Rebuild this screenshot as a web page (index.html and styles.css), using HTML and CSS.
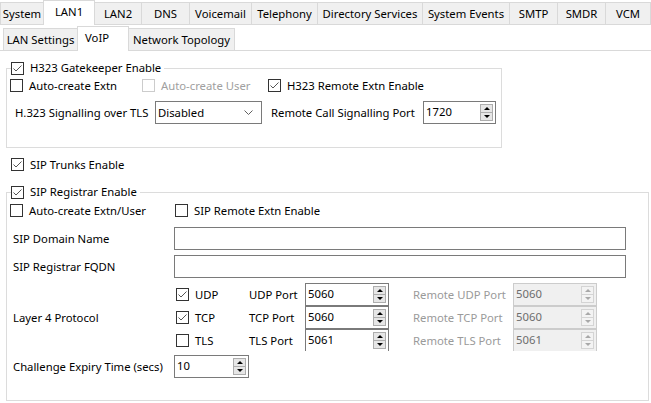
FILE: index.html
```html
<!DOCTYPE html>
<html lang="en">
<head>
    <meta charset="UTF-8">
    <meta name="viewport" content="width=device-width, initial-scale=1.0">
    <title>VoIP Settings</title>
    <link rel="stylesheet" href="styles.css">
</head>
<body>

    <!-- Main tabs -->
    <div class="tabs tabs-main">
        <div class="tab">System</div>
        <div class="tab active">LAN1</div>
        <div class="tab">LAN2</div>
        <div class="tab">DNS</div>
        <div class="tab">Voicemail</div>
        <div class="tab">Telephony</div>
        <div class="tab">Directory Services</div>
        <div class="tab">System Events</div>
        <div class="tab">SMTP</div>
        <div class="tab">SMDR</div>
        <div class="tab">VCM</div>
    </div>

    <!-- Sub tabs -->
    <div class="tabs tabs-sub">
        <div class="tab">LAN Settings</div>
        <div class="tab active">VoIP</div>
        <div class="tab">Network Topology</div>
    </div>

    <div class="page">

        <!-- H323 -->
        <fieldset class="group group-h323">
            <legend>
                <label class="check"><span class="box"><svg viewBox="0 0 11 11"><path d="M1.5 5.5 L4 8 L9.5 2.5"/></svg></span>H323 Gatekeeper Enable</label>
            </legend>
            <div class="row row-checks">
                <label class="check w-extn"><span class="box"></span>Auto-create Extn</label>
                <label class="check w-user disabled"><span class="box"></span>Auto-create User</label>
                <label class="check"><span class="box"><svg viewBox="0 0 11 11"><path d="M1.5 5.5 L4 8 L9.5 2.5"/></svg></span>H323 Remote Extn Enable</label>
            </div>
            <div class="row row-tls">
                <span class="lbl lbl-tls">H.323 Signalling over TLS</span>
                <div class="select">
                    <span>Disabled</span>
                    <svg viewBox="0 0 9 5"><path d="M0.5 0.5 L4.5 4.5 L8.5 0.5"/></svg>
                </div>
                <span class="lbl lbl-port">Remote Call Signalling Port</span>
                <div class="spin spin-call">
                    <span class="val">1720</span>
                    <span class="arrows"><span class="arr up"></span><span class="arr down"></span></span>
                </div>
            </div>
        </fieldset>

        <div class="row row-trunks">
            <label class="check"><span class="box"><svg viewBox="0 0 11 11"><path d="M1.5 5.5 L4 8 L9.5 2.5"/></svg></span>SIP Trunks Enable</label>
        </div>

        <!-- SIP Registrar -->
        <fieldset class="group group-sip">
            <legend>
                <label class="check"><span class="box"><svg viewBox="0 0 11 11"><path d="M1.5 5.5 L4 8 L9.5 2.5"/></svg></span>SIP Registrar Enable</label>
            </legend>
            <div class="row row-checks">
                <label class="check w-auto"><span class="box"></span>Auto-create Extn/User</label>
                <label class="check"><span class="box"></span>SIP Remote Extn Enable</label>
            </div>
            <div class="row field field-first">
                <span class="lbl lbl-field">SIP Domain Name</span>
                <div class="text-input"></div>
            </div>
            <div class="row field">
                <span class="lbl lbl-field">SIP Registrar FQDN</span>
                <div class="text-input"></div>
            </div>

            <div class="protocols">
                <span class="lbl proto-label">Layer 4 Protocol</span>

                <label class="check proto-check"><span class="box"><svg viewBox="0 0 11 11"><path d="M1.5 5.5 L4 8 L9.5 2.5"/></svg></span>UDP</label>
                <span class="lbl">UDP Port</span>
                <div class="spin"><span class="val">5060</span><span class="arrows"><span class="arr up"></span><span class="arr down"></span></span></div>
                <span></span>
                <span class="lbl muted">Remote UDP Port</span>
                <div class="spin off"><span class="val">5060</span><span class="arrows"><span class="arr up"></span><span class="arr down"></span></span></div>

                <label class="check proto-check"><span class="box"><svg viewBox="0 0 11 11"><path d="M1.5 5.5 L4 8 L9.5 2.5"/></svg></span>TCP</label>
                <span class="lbl">TCP Port</span>
                <div class="spin"><span class="val">5060</span><span class="arrows"><span class="arr up"></span><span class="arr down"></span></span></div>
                <span></span>
                <span class="lbl muted">Remote TCP Port</span>
                <div class="spin off"><span class="val">5060</span><span class="arrows"><span class="arr up"></span><span class="arr down"></span></span></div>

                <label class="check proto-check"><span class="box"></span>TLS</label>
                <span class="lbl">TLS Port</span>
                <div class="spin"><span class="val">5061</span><span class="arrows"><span class="arr up"></span><span class="arr down"></span></span></div>
                <span></span>
                <span class="lbl muted">Remote TLS Port</span>
                <div class="spin off"><span class="val">5061</span><span class="arrows"><span class="arr up"></span><span class="arr down"></span></span></div>
            </div>

            <div class="row field field-expiry">
                <span class="lbl lbl-field">Challenge Expiry Time (secs)</span>
                <div class="spin spin-expiry">
                    <span class="val">10</span>
                    <span class="arrows"><span class="arr up"></span><span class="arr down"></span></span>
                </div>
            </div>
        </fieldset>

    </div>

</body>
</html>
```

FILE: styles.css
```css
* { margin: 0; padding: 0; box-sizing: border-box; }
body { width: 651px; height: 403px; overflow: hidden; background: #fff; color: #000; font: 11.3px "Noto Sans", "Liberation Sans", sans-serif; }

/* Tabs */
.tabs { display: grid; align-items: end; height: 25px; border-bottom: 1px solid #d9d9d9; }
.tabs-main { grid-template-columns: 44px 51px 47px 48px 62px 66px 105px 87px 48px 48px 1fr; }
.tabs-sub { margin-top: 1px; padding-left: 3px; grid-template-columns: 75px 51px 106px; }

.tab {
    height: 22px;
    display: flex;
    align-items: center;
    justify-content: center;
    white-space: nowrap;
    background: #f0f0f0;
    border-top: 1px solid #d9d9d9;
    border-right: 1px solid #d9d9d9;
}
.tab:first-child { border-left: 1px solid #d9d9d9; }

.tab.active {
    position: relative;
    z-index: 1;
    height: 25px;
    margin-bottom: -1px;
    margin-left: -1px;
    padding-bottom: 3px;
    background: #fff;
    border-left: 1px solid #d9d9d9;
}
.tabs-sub .tab.active { justify-content: flex-start; padding-left: 7px; }

/* Group boxes */
.group { border: 1px solid #dcdcdc; margin: 9px 0 0 6px; padding: 0 0 23px 0; min-width: 0; }
.group-h323 { width: 496px; }
.group-sip { width: 643px; margin-top: 11px; padding-bottom: 22px; }
.group legend { margin-left: 4px; padding: 0 3px 0 0; height: 16px; line-height: 16px; }

.row { display: flex; align-items: center; }
.row-checks { height: 17px; margin-top: 1px; padding-left: 3px; }
.group-sip .row-checks { margin-top: 2px; }
.row-tls { height: 23px; margin-top: 7px; padding-left: 8px; }
.row-trunks { height: 17px; margin: 8px 0 0 11px; }

.w-extn { width: 132px; }
.w-user { width: 126px; }
.w-auto { width: 165px; }

/* Checkbox */
.check { display: flex; align-items: center; gap: 6px; white-space: nowrap; }
.box {
    flex: none;
    width: 13px;
    height: 13px;
    display: flex;
    align-items: center;
    justify-content: center;
    background: #fff;
    border: 1px solid #333;
}
.box svg { width: 11px; height: 11px; fill: none; stroke: #555; stroke-width: 1; }
.check.disabled { color: #a0a0a0; }
.check.disabled .box { border-color: #ccc; }

/* Labels */
.lbl { white-space: nowrap; }
.lbl-tls { width: 140px; }
.lbl-port { width: 152px; margin-left: 9px; }
.lbl-field { width: 161px; }
.muted { color: #9a9a9a; }

/* Inputs */
.select {
    width: 107px;
    height: 23px;
    display: flex;
    align-items: center;
    justify-content: space-between;
    padding: 0 8px 0 2px;
    border: 1px solid #7a7a7a;
    background: #fff;
}
.select svg { width: 9px; height: 5px; fill: none; stroke: #606060; stroke-width: 1; }

.text-input { width: 452px; height: 23px; border: 1px solid #7a7a7a; background: #fff; }

.spin { display: flex; height: 23px; border: 1px solid #7a7a7a; background: #fff; }
.spin .val { flex: 1; padding-left: 2px; line-height: 19px; }
.spin .arrows {
    width: 13px;
    margin: 2px 2px 2px 0;
    display: flex;
    flex-direction: column;
    border: 1px solid #adadad;
    background: #e6e6e6;
}
.arr { flex: 1; display: flex; align-items: center; justify-content: center; }
.arr.up { border-bottom: 1px solid #adadad; }
.arr.up::before { content: ""; border-left: 3px solid transparent; border-right: 3px solid transparent; border-bottom: 3px solid #000; }
.arr.down::before { content: ""; border-left: 3px solid transparent; border-right: 3px solid transparent; border-top: 3px solid #000; }

.spin.off { background: #f0f0f0; border-color: #cccccc; color: #6d6d6d; }
.spin.off .arrows { border-color: #d4d4d4; background: #f3f3f3; }
.spin.off .arr.up { border-bottom-color: #d4d4d4; }
.spin.off .arr.up::before { border-bottom-color: #a8a8a8; }
.spin.off .arr.down::before { border-top-color: #a8a8a8; }

.spin-call { width: 73px; }
.spin-expiry { width: 75px; }

/* SIP fields */
.field { height: 23px; margin-top: 5px; padding-left: 6px; }
.field-first { margin-top: 8px; }
.field-expiry { margin-top: 4px; }

.protocols {
    display: grid;
    grid-template-columns: 161px 75px 56px 84px 24px 100px 84px;
    grid-template-rows: 23px 23px 23px;
    align-items: center;
    height: 68px;
    margin-top: 5px;
    padding-left: 6px;
    overflow: hidden;
}
.proto-label { grid-row: 1 / span 3; }
.proto-check { padding-left: 2px; }
```
